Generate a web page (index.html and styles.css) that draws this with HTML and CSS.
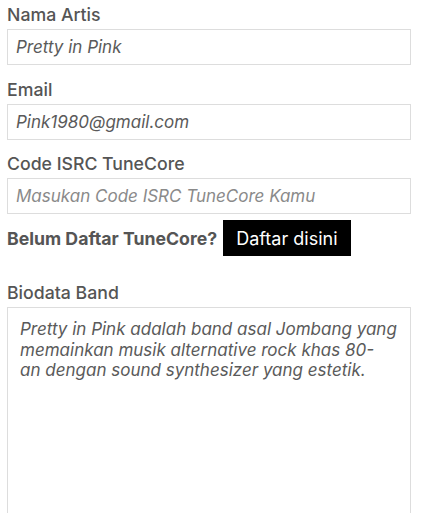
FILE: index.html
```
<!DOCTYPE html>
<html lang="id">
<head>
<meta charset="utf-8">
<link rel="stylesheet" href="styles.css">
</head>
<body>
<form class="form">
  <div class="field">
    <label class="label" for="nama">Nama Artis</label>
    <input class="input" id="nama" type="text" value="Pretty in Pink">
  </div>
  <div class="field">
    <label class="label" for="email">Email</label>
    <input class="input" id="email" type="text" value="Pink1980@gmail.com">
  </div>
  <div class="field field-tight">
    <label class="label" for="isrc">Code ISRC TuneCore</label>
    <input class="input" id="isrc" type="text" placeholder="Masukan Code ISRC TuneCore Kamu">
  </div>
  <div class="signup">
    <span class="signup-text">Belum Daftar TuneCore?</span>
    <button class="btn" type="button">Daftar disini</button>
  </div>
  <div class="field field-bio">
    <label class="label" for="bio">Biodata Band</label>
    <textarea class="textarea" id="bio">Pretty in Pink adalah band asal Jombang yang memainkan musik alternative rock khas 80-
an dengan sound synthesizer yang estetik.</textarea>
  </div>
</form>
</body>
</html>
```
FILE: styles.css
```
* { box-sizing: border-box; }
html, body { margin: 0; padding: 0; background: #fff; }
body {
  font-family: "Inter", "Noto Sans", sans-serif;
  color: #555;
  overflow: hidden;
}
.form {
  padding: 3px 12px 0 7px;
  display: flex;
  flex-direction: column;
}
.field {
  display: flex;
  flex-direction: column;
  gap: 2px;
  margin-bottom: 12.5px;
}
.field-tight { margin-bottom: 6px; }
.label {
  font-size: 17.7px;
  line-height: 24px;
  font-weight: 500;
  color: #555;
}
.input, .textarea {
  width: 100%;
  border: 1px solid #ddd;
  border-radius: 0;
  font-family: inherit;
  font-style: italic;
  font-size: 17px;
  color: #5a5a5a;
  outline: none;
  background: #fff;
}
.input {
  height: 36px;
  padding: 0 8px;
}
.input::placeholder { color: #8a8a8a; opacity: 1; }
.signup {
  display: flex;
  align-items: center;
  gap: 6px;
  margin-bottom: 25px;
}
.signup-text {
  font-size: 17.7px;
  font-weight: 700;
  color: #555;
}
.btn {
  height: 36px;
  padding: 0 13px;
  background: #000;
  color: #fff;
  border: none;
  border-radius: 0;
  font-family: inherit;
  font-size: 18px;
}
.textarea {
  height: 260px;
  padding: 11px 12px;
  line-height: 20.5px;
  resize: none;
}
```
